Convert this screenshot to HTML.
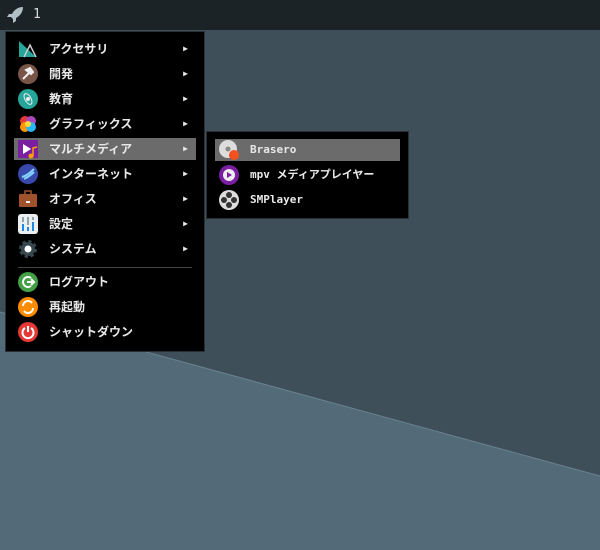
<!DOCTYPE html>
<html><head><meta charset="utf-8"><style>
*{margin:0;padding:0;box-sizing:border-box}
body{width:600px;height:550px;overflow:hidden;position:relative;background:#3e4f59;font-family:"DejaVu Sans Mono","Noto Sans CJK JP",monospace;font-weight:bold;color:#e8e8e8;font-size:12px}
#bg{position:absolute;left:0;top:0}
#bar{position:absolute;left:0;top:0;width:600px;height:30px;background:#1c2327}
#bar span{position:absolute;left:33px;top:7px;font-size:13px;color:#ddd;font-weight:normal}
.menu{position:absolute;background:#000;border:1px solid #2a3136}
.it{position:absolute;height:22px;line-height:22px;left:8px;right:8px}
.it.hl{background:#6b6b6b}
.it .ic{position:absolute;left:4px;top:1px;width:20px;height:20px}
.it .t{position:absolute;left:35px;top:0}
.it .a{position:absolute;right:8px;top:0;font-size:8px}
.sep{position:absolute;left:12px;right:12px;height:1px;background:#444;top:235px}
</style></head><body>
<svg id="bg" width="600" height="550"><polygon points="0,312 600,476 600,550 0,550" fill="#536b78"/><line x1="0" y1="312" x2="600" y2="476" stroke="#6a8290" stroke-width="1"/></svg>
<div id="bar"><svg style="position:absolute;left:6px;top:6px" width="18" height="18" viewBox="0 0 18 18"><path d="M17 1C12 1 8 4 6 8L3 8 1 11 5 11 7 13 7 17 10 15 10 12C14 10 17 6 17 1Z" fill="#b0bec5"/></svg><span>1</span></div>
<div class="menu" style="left:5px;top:31px;width:200px;height:321px">
<div class="it" style="top:6px"><svg class="ic" viewBox="0 0 20 20"><path d="M1 2L18 18 1 18Z" fill="#26a69a"/><path d="M6 18L12 6 18 18" stroke="#ccc" fill="none" stroke-width="1.5"/></svg><span class="t">アクセサリ</span><span class="a">▶</span></div>
<div class="it" style="top:31px"><svg class="ic" viewBox="0 0 20 20"><circle cx="10" cy="10" r="10" fill="#795548"/><path d="M5 15L11 9M8 6L12 4 15 8 13 10Z" stroke="#eee" stroke-width="2" fill="#eee"/></svg><span class="t">開発</span><span class="a">▶</span></div>
<div class="it" style="top:56px"><svg class="ic" viewBox="0 0 20 20"><circle cx="10" cy="10" r="10" fill="#26a69a"/><ellipse cx="10" cy="10" rx="6" ry="3" fill="none" stroke="#eee" transform="rotate(60 10 10)"/><circle cx="10" cy="10" r="2" fill="#eee"/></svg><span class="t">教育</span><span class="a">▶</span></div>
<div class="it" style="top:81px"><svg class="ic" viewBox="0 0 20 20"><circle cx="7" cy="7" r="5" fill="#e53935"/><circle cx="13" cy="7" r="5" fill="#ab47bc"/><circle cx="7" cy="13" r="5" fill="#ff9800"/><circle cx="13" cy="13" r="5" fill="#29b6f6"/><circle cx="10" cy="10" r="3" fill="#fdd835"/></svg><span class="t">グラフィックス</span><span class="a">▶</span></div>
<div class="it hl" style="top:106px"><svg class="ic" viewBox="0 0 20 20"><rect x="0" y="1" width="20" height="18" fill="#7b1fa2"/><path d="M5 5L13 10 5 15Z" fill="#fff"/><circle cx="13" cy="17" r="2.5" fill="#ffa000"/><path d="M15 17V9L19 8" stroke="#ffa000" stroke-width="1.5" fill="none"/></svg><span class="t">マルチメディア</span><span class="a">▶</span></div>
<div class="it" style="top:131px"><svg class="ic" viewBox="0 0 20 20"><circle cx="10" cy="10" r="10" fill="#3949ab"/><path d="M4 13C8 12 12 9 16 5M6 15C10 13 13 11 16 8" stroke="#81d4fa" stroke-width="2" fill="none"/></svg><span class="t">インターネット</span><span class="a">▶</span></div>
<div class="it" style="top:156px"><svg class="ic" viewBox="0 0 20 20"><rect x="1" y="5" width="18" height="13" rx="1" fill="#a0522d"/><rect x="7" y="2" width="6" height="4" fill="none" stroke="#a0522d" stroke-width="1.5"/><rect x="8" y="12" width="4" height="2" fill="#eee"/></svg><span class="t">オフィス</span><span class="a">▶</span></div>
<div class="it" style="top:181px"><svg class="ic" viewBox="0 0 20 20"><rect x="0" y="0" width="20" height="20" rx="3" fill="#eceff1"/><path d="M5 10V17M10 13V17M15 8V17" stroke="#1e88e5" stroke-width="2"/><path d="M5 3V8M10 3V11M15 3V6" stroke="#90a4ae" stroke-width="2"/></svg><span class="t">設定</span><span class="a">▶</span></div>
<div class="it" style="top:206px"><svg class="ic" viewBox="0 0 20 20"><circle cx="10" cy="10" r="7" fill="#37474f" stroke="#37474f" stroke-width="4" stroke-dasharray="3 2.5"/><circle cx="10" cy="10" r="3.5" fill="#fff"/></svg><span class="t">システム</span><span class="a">▶</span></div>
<div class="sep"></div>
<div class="it" style="top:239px"><svg class="ic" viewBox="0 0 20 20"><circle cx="10" cy="10" r="10" fill="#43a047"/><path d="M13 6A5 5 0 1 0 13 14" stroke="#fff" stroke-width="2" fill="none"/><path d="M9 10H16M13 7L16 10 13 13" stroke="#fff" stroke-width="2" fill="none"/></svg><span class="t">ログアウト</span></div>
<div class="it" style="top:264px"><svg class="ic" viewBox="0 0 20 20"><circle cx="10" cy="10" r="10" fill="#fb8c00"/><path d="M5 9A5 5 0 0 1 14 6M15 11A5 5 0 0 1 6 14" stroke="#fff" stroke-width="2" fill="none"/></svg><span class="t">再起動</span></div>
<div class="it" style="top:289px"><svg class="ic" viewBox="0 0 20 20"><circle cx="10" cy="10" r="10" fill="#e53935"/><path d="M7 6A5.5 5.5 0 1 0 13 6M10 4V10" stroke="#fff" stroke-width="2" fill="none"/></svg><span class="t">シャットダウン</span></div>
</div>
<div class="menu" style="left:206px;top:131px;width:203px;height:88px;font-size:11px">
<div class="it hl" style="top:7px"><svg class="ic" viewBox="0 0 20 20"><circle cx="9" cy="9" r="9" fill="#ddd"/><circle cx="9" cy="9" r="2.5" fill="#888"/><circle cx="15" cy="15" r="5" fill="#f4511e"/></svg><span class="t">Brasero</span></div>
<div class="it" style="top:32px"><svg class="ic" viewBox="0 0 20 20"><circle cx="10" cy="10" r="10" fill="#7b1fa2"/><circle cx="10" cy="10" r="6" fill="#eee"/><path d="M8 7L13 10 8 13Z" fill="#7b1fa2"/></svg><span class="t">mpv メディアプレイヤー</span></div>
<div class="it" style="top:57px"><svg class="ic" viewBox="0 0 20 20"><circle cx="10" cy="10" r="10" fill="#ddd"/><circle cx="10" cy="5" r="3" fill="#333"/><circle cx="10" cy="15" r="3" fill="#333"/><circle cx="5" cy="10" r="3" fill="#333"/><circle cx="15" cy="10" r="3" fill="#333"/></svg><span class="t">SMPlayer</span></div>
</div>
</body></html>
